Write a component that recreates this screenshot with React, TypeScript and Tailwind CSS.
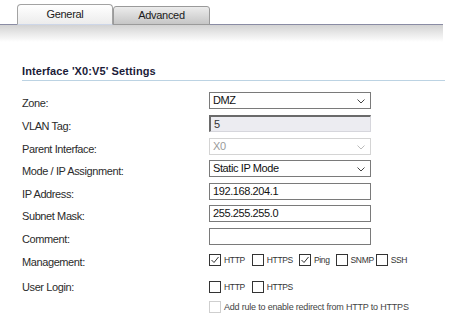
import React from "react";

type Row = {
  label: string;
  h: string;
  kind: "select" | "readonly" | "disabledSelect" | "text";
  value?: string;
};

const rows: Row[] = [
  { label: "Zone:", h: "h-[23px]", kind: "select", value: "DMZ" },
  { label: "VLAN Tag:", h: "h-[23px]", kind: "readonly", value: "5" },
  { label: "Parent Interface:", h: "h-[22px]", kind: "disabledSelect", value: "X0" },
  { label: "Mode / IP Assignment:", h: "h-[23px]", kind: "select", value: "Static IP Mode" },
  { label: "IP Address:", h: "h-[22px]", kind: "text", value: "192.168.204.1" },
  { label: "Subnet Mask:", h: "h-[23px]", kind: "text", value: "255.255.255.0" },
  { label: "Comment:", h: "h-[26px]", kind: "text", value: "" },
];

const management = [
  { label: "HTTP", checked: true, cls: "" },
  { label: "HTTPS", checked: false, cls: "ml-[7px]" },
  { label: "Ping", checked: true, cls: "ml-[6px]" },
  { label: "SNMP", checked: false, cls: "ml-[6px]" },
  { label: "SSH", checked: false, cls: "ml-[2px]" },
];

function Chevron({ color }: { color: string }) {
  return (
    <svg width="8" height="5" viewBox="0 0 8 5" className="absolute right-[5px] top-[6px]">
      <path d="M0.5 0.5 L4 4 L7.5 0.5" fill="none" stroke={color} strokeWidth="1" />
    </svg>
  );
}

function Box({ checked, disabled }: { checked?: boolean; disabled?: boolean }) {
  return (
    <svg width="12" height="12" viewBox="0 0 12 12" className="shrink-0">
      <rect x="0.5" y="0.5" width="11" height="11" fill="white" stroke={disabled ? "#cfcfcf" : "#333"} />
      {checked && <path d="M2.5 6 L5 8.5 L9.5 3" fill="none" stroke="#333" strokeWidth="1" />}
    </svg>
  );
}

function Control({ row }: { row: Row }) {
  const base = "relative w-[162px] h-[17px] text-[11px] tracking-[-0.4px] leading-[15px] pl-[3px]";
  if (row.kind === "select")
    return (
      <div className={`${base} border border-[#7a7a7a] bg-white text-[#111]`}>
        {row.value}
        <Chevron color="#444" />
      </div>
    );
  if (row.kind === "readonly")
    return (
      <div className={`${base} border border-[#d6d6dc] border-l-2 border-t-2 border-l-[#6a6a6a] border-t-[#6a6a6a] bg-[#ececf1] text-[#333] leading-[13px]`}>
        {row.value}
      </div>
    );
  if (row.kind === "disabledSelect")
    return (
      <div className={`${base} border border-[#d4d4d4] bg-white text-[#9a9a9a]`}>
        {row.value}
        <Chevron color="#bbb" />
      </div>
    );
  return <div className={`${base} border border-[#7a7a7a] bg-white text-[#111]`}>{row.value}</div>;
}

const small = "ml-[3px] text-[8.5px] tracking-[-0.35px] leading-[12px] text-[#333]";

export default function App() {
  return (
    <div className="w-[450px] h-[319px] bg-white overflow-hidden font-['Liberation_Sans',Arial,sans-serif] text-[#2b2b2b]">
      {/* Tabs */}
      <div className="flex items-end h-[25px] w-[443px] pl-[17px] pt-[4px] border-b border-[#8a8ca4]">
        <div className="-mb-px w-[96px] h-[21px] rounded-t-[4px] border border-[#a3a3a3] border-b-[#cdd6e8] bg-linear-to-b from-white to-[#ececec] text-center text-[11px] tracking-[-0.3px] leading-[19px] text-[#1a1a1a]">
          General
        </div>
        <div className="-mb-px w-[97px] h-[19px] rounded-t-[3px] border border-[#9a9a9a] bg-linear-to-b from-[#ececec] to-[#c6c6c6] text-center text-[11px] tracking-[-0.3px] leading-[16px] text-[#1a1a1a]">
          Advanced
        </div>
      </div>
      <div className="h-[17px] w-[443px] bg-linear-to-b from-[#d3d3d3] to-white" />

      {/* Section heading */}
      <div className="mt-[23px] ml-[22px] w-[423px] border-b border-[#bcd3e3] pb-[2px] text-[11px] font-bold leading-[13px] tracking-[0.1px] text-[#1b1b38]">
        Interface 'X0:V5' Settings
      </div>

      {/* Form */}
      <div className="mt-[11px] ml-[22px]">
        {rows.map((row) => (
          <div key={row.label} className={`flex ${row.h}`}>
            <div className="w-[187px] pt-[5px] text-[11px] leading-[13px] tracking-[-0.4px]">{row.label}</div>
            <Control row={row} />
          </div>
        ))}

        <div className="flex h-[27px]">
          <div className="w-[187px] pt-[2px] text-[11px] leading-[13px] tracking-[-0.4px]">Management:</div>
          <div className="flex items-center h-[12px]">
            {management.map((m) => (
              <div key={m.label} className={`flex items-center ${m.cls}`}>
                <Box checked={m.checked} />
                <span className={small}>{m.label}</span>
              </div>
            ))}
          </div>
        </div>

        <div className="flex h-[20px]">
          <div className="w-[187px] text-[11px] leading-[13px] tracking-[-0.4px]">User Login:</div>
          <div className="flex items-center h-[12px]">
            <Box />
            <span className={small}>HTTP</span>
            <div className="ml-[7px] flex items-center">
              <Box />
              <span className={small}>HTTPS</span>
            </div>
          </div>
        </div>

        <div className="flex h-[14px]">
          <div className="w-[187px]" />
          <div className="flex items-center h-[12px]">
            <Box disabled />
            <span className="ml-[3px] text-[9px] tracking-[-0.2px] leading-[12px] text-[#444]">
              Add rule to enable redirect from HTTP to HTTPS
            </span>
          </div>
        </div>
      </div>
    </div>
  );
}
